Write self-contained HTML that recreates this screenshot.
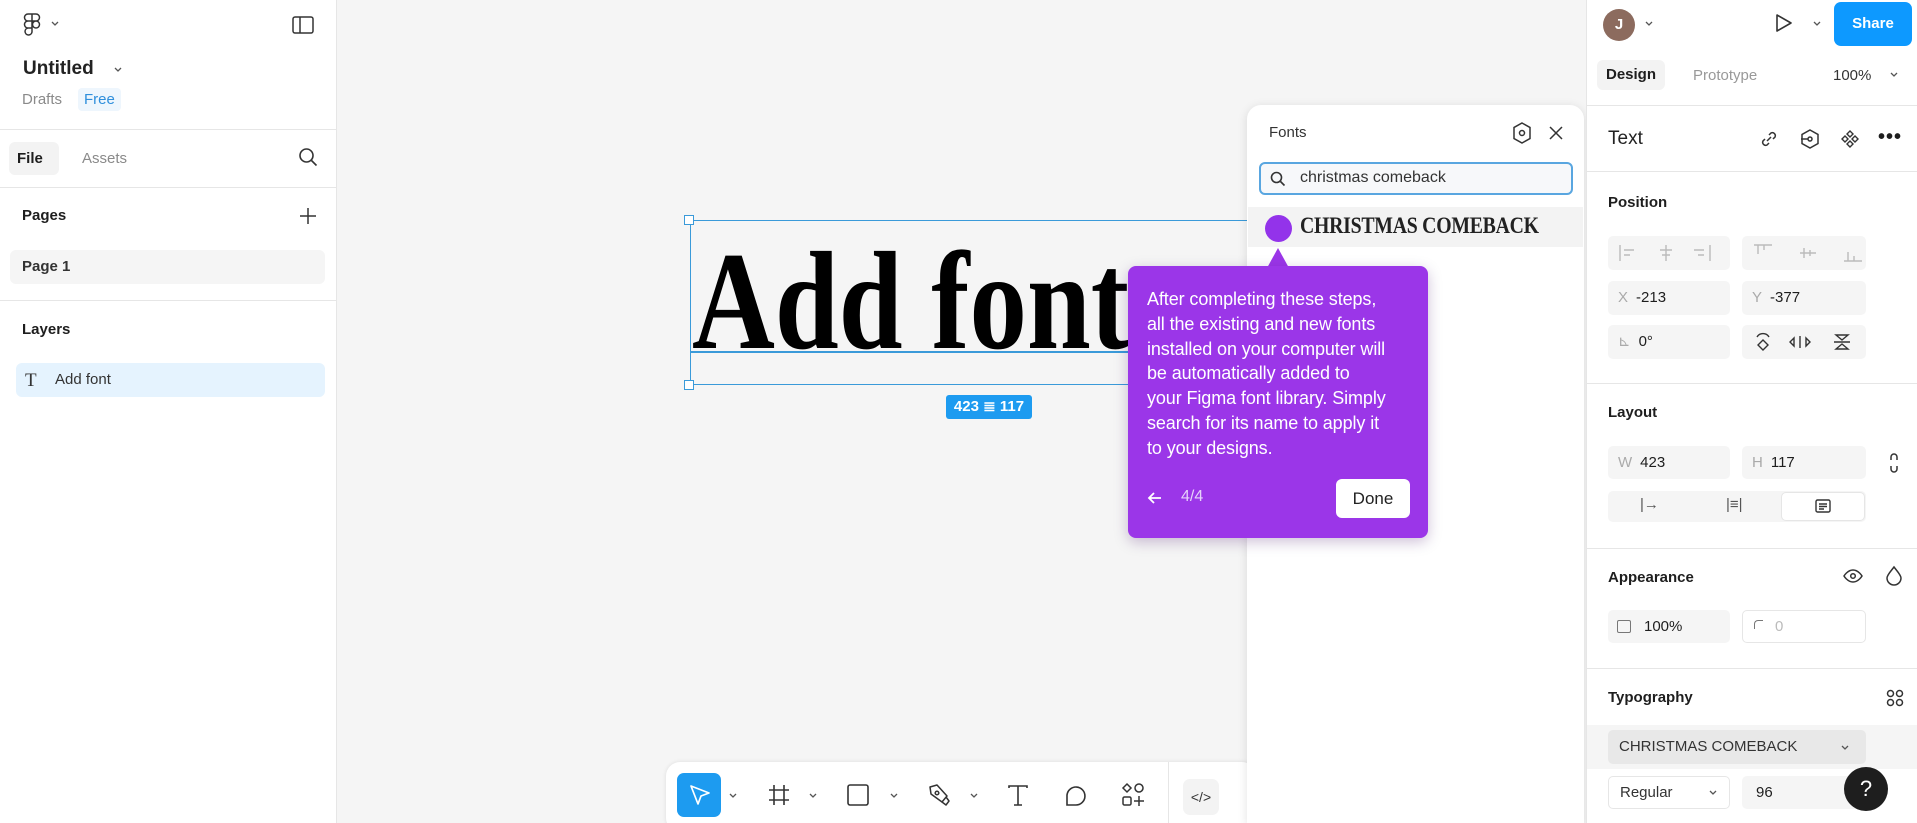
<!DOCTYPE html>
<html><head><meta charset="utf-8">
<style>
*{box-sizing:border-box;margin:0;padding:0}
html,body{width:1917px;height:823px;overflow:hidden}
body{background:#f5f5f5;font-family:"Liberation Sans",sans-serif;color:#1e1e1e;position:relative}
.abs{position:absolute}
.lp{left:0;top:0;width:337px;height:823px;background:#fff;border-right:1px solid #e6e6e6}
.hr{position:absolute;height:1px;background:#e6e6e6}
.rp{left:1586px;top:0;width:331px;height:823px;background:#fff;border-left:1px solid #e6e6e6}
.field{position:absolute;background:#f5f5f5;border-radius:5px;font-size:15px;line-height:34px;padding-left:10px}
.lbl{color:#aaa;margin-right:8px}
.sh{position:absolute;font-size:15px;font-weight:bold;color:#1e1e1e}
svg{position:absolute;overflow:visible}
</style></head><body>

<!-- left panel -->
<div class="abs lp">
  <svg style="left:24px;top:13px" width="16" height="24" viewBox="0 0 16 24" fill="none" stroke="#333" stroke-width="1.5"><path d="M4 1h4v7H4a3.5 3.5 0 0 1 0-7zM8 1h4a3.5 3.5 0 0 1 0 7H8zM4 8h4v7H4a3.5 3.5 0 0 1 0-7zM12 8a3.5 3.5 0 1 1 0 7 3.5 3.5 0 0 1 0-7zM4 15h4v4a3.5 3.5 0 1 1-4-4z"/></svg>
  <svg style="left:51px;top:21px" width="8" height="6" viewBox="0 0 8 6" fill="none" stroke="#555" stroke-width="1.3"><path d="M1 1l3 3 3-3"/></svg>
  <svg style="left:292px;top:16px" width="22" height="18" viewBox="0 0 22 18" fill="none" stroke="#333" stroke-width="1.5"><rect x="1" y="1" width="20" height="16" rx="2"/><path d="M8 1v16"/></svg>
  <div class="abs" style="left:23px;top:58px;font-size:19px;font-weight:bold;color:#222">Untitled</div>
  <svg style="left:114px;top:67px" width="8" height="6" viewBox="0 0 8 6" fill="none" stroke="#555" stroke-width="1.3"><path d="M1 1l3 3 3-3"/></svg>
  <div class="abs" style="left:22px;top:91px;font-size:15px;color:#8a8a8a">Drafts</div>
  <div class="abs" style="left:78px;top:88px;font-size:15px;color:#2f8fdc;background:#eef6fd;padding:3px 6px;border-radius:4px">Free</div>
  <div class="hr" style="left:0;top:129px;width:337px"></div>
  <div class="abs" style="left:9px;top:142px;width:50px;height:33px;background:#f3f3f3;border-radius:6px;font-size:15px;font-weight:bold;line-height:33px;padding-left:8px">File</div>
  <div class="abs" style="left:82px;top:150px;font-size:15px;color:#8a8a8a">Assets</div>
  <svg style="left:298px;top:147px" width="20" height="20" viewBox="0 0 20 20" fill="none" stroke="#333" stroke-width="1.6"><circle cx="8.5" cy="8.5" r="6.5"/><path d="M13.5 13.5l5 5"/></svg>
  <div class="hr" style="left:0;top:187px;width:337px"></div>
  <div class="abs" style="left:22px;top:207px;font-size:15px;font-weight:bold">Pages</div>
  <svg style="left:299px;top:207px" width="18" height="18" viewBox="0 0 18 18" fill="none" stroke="#333" stroke-width="1.5"><path d="M9 1v16M1 9h16"/></svg>
  <div class="abs" style="left:10px;top:250px;width:315px;height:34px;background:#f5f5f5;border-radius:6px;font-size:15px;line-height:34px;padding-left:12px;font-weight:bold;color:#333">Page 1</div>
  <div class="hr" style="left:0;top:300px;width:337px"></div>
  <div class="abs" style="left:22px;top:321px;font-size:15px;font-weight:bold">Layers</div>
  <div class="abs" style="left:16px;top:363px;width:309px;height:34px;background:#e5f3fe;border-radius:6px;font-size:15px;line-height:34px;padding-left:39px;color:#333">Add font</div>
  <div class="abs" style="left:25px;top:370px;font-size:19px;font-family:'Liberation Serif',serif;color:#333">T</div>
</div>

<!-- canvas -->
<div class="abs" style="left:690px;top:220px;width:570px;height:165px;border:1.5px solid #3a9ad9;border-right:none"></div>
<div class="abs" style="left:684px;top:215px;width:10px;height:10px;background:#fff;border:1.5px solid #3a9ad9"></div>
<div class="abs" style="left:684px;top:380px;width:10px;height:10px;background:#fff;border:1.5px solid #3a9ad9"></div>
<div class="abs" style="left:692px;top:232px;font-family:'Liberation Serif',serif;font-weight:bold;font-size:140px;line-height:140px;transform:scaleX(0.82);transform-origin:left top;color:#000;letter-spacing:0px;white-space:nowrap">Add font</div>
<div class="abs" style="left:690px;top:351px;width:560px;height:2px;background:#3a9ad9"></div>
<div class="abs" style="left:946px;top:395px;width:86px;height:24px;background:#1d9bf0;border-radius:3px;color:#fff;font-size:15px;line-height:24px;text-align:center;font-weight:bold">423 ≣ 117</div>

<!-- toolbar -->
<div class="abs" style="left:666px;top:762px;width:590px;height:70px;background:#fff;border-radius:14px;box-shadow:0 0 4px rgba(0,0,0,.1)"></div>
<div class="abs" style="left:677px;top:773px;width:44px;height:44px;background:#1d9bf0;border-radius:7px"></div>
<svg style="left:688px;top:783px" width="24" height="24" viewBox="0 0 24 24" fill="none" stroke="#fff" stroke-width="1.7" stroke-linejoin="round"><path d="M3 3l18 7-8 3-3 8z"/></svg>
<svg style="left:729px;top:793px" width="8" height="6" viewBox="0 0 8 6" fill="none" stroke="#555" stroke-width="1.3"><path d="M1 1l3 3 3-3"/></svg>
<svg style="left:768px;top:784px" width="22" height="22" viewBox="0 0 22 22" fill="none" stroke="#333" stroke-width="1.6"><path d="M6 1v20M16 1v20M1 6h20M1 16h20"/></svg>
<svg style="left:809px;top:793px" width="8" height="6" viewBox="0 0 8 6" fill="none" stroke="#555" stroke-width="1.3"><path d="M1 1l3 3 3-3"/></svg>
<svg style="left:847px;top:784px" width="22" height="22" viewBox="0 0 22 22" fill="none" stroke="#333" stroke-width="1.6"><rect x="1" y="1" width="20" height="20" rx="2"/></svg>
<svg style="left:890px;top:793px" width="8" height="6" viewBox="0 0 8 6" fill="none" stroke="#555" stroke-width="1.3"><path d="M1 1l3 3 3-3"/></svg>
<svg style="left:928px;top:784px" width="22" height="22" viewBox="0 0 22 22" fill="none" stroke="#333" stroke-width="1.5" stroke-linejoin="round"><path d="M2 3l7-2 10 11-5 6L3 10z"/><circle cx="9" cy="9" r="1.8"/><path d="M14 18l4 3 3-4-3-4"/></svg>
<svg style="left:970px;top:793px" width="8" height="6" viewBox="0 0 8 6" fill="none" stroke="#555" stroke-width="1.3"><path d="M1 1l3 3 3-3"/></svg>
<svg style="left:1007px;top:784px" width="22" height="22" viewBox="0 0 22 22" fill="none" stroke="#333" stroke-width="1.6"><path d="M2 4V2h18v2M11 2v19M7 21h8"/></svg>
<svg style="left:1065px;top:784px" width="22" height="22" viewBox="0 0 22 22" fill="none" stroke="#333" stroke-width="1.6"><path d="M2 21V11a9 9 0 1 1 9 10z"/></svg>
<svg style="left:1121px;top:783px" width="24" height="24" viewBox="0 0 24 24" fill="none" stroke="#333" stroke-width="1.5"><path d="M6 1l4 4-4 4-4-4z"/><circle cx="18" cy="5" r="4"/><rect x="2" y="14" width="8" height="8" rx="1.5"/><path d="M18 13v10M13 18h10"/></svg>
<div class="abs" style="left:1168px;top:762px;width:1px;height:61px;background:#e6e6e6"></div>
<div class="abs" style="left:1183px;top:779px;width:36px;height:36px;background:#f3f3f3;border-radius:7px;font-size:14px;line-height:36px;text-align:center;color:#333">&lt;/&gt;</div>

<!-- fonts panel -->
<div class="abs" style="left:1247px;top:105px;width:337px;height:718px;background:#fff;border-radius:14px 14px 0 0;box-shadow:0 2px 10px rgba(0,0,0,.12)"></div>
<div class="abs" style="left:1269px;top:124px;font-size:15px;color:#333">Fonts</div>
<svg style="left:1512px;top:122px" width="20" height="22" viewBox="0 0 20 22" fill="none" stroke="#333" stroke-width="1.5"><path d="M10 1l8 4.5v11L10 21l-8-4.5v-11z"/><circle cx="10" cy="11" r="2.5"/></svg>
<svg style="left:1549px;top:126px" width="14" height="14" viewBox="0 0 14 14" fill="none" stroke="#333" stroke-width="1.5"><path d="M1 1l12 12M13 1L1 13"/></svg>
<div class="abs" style="left:1259px;top:162px;width:314px;height:33px;border:2px solid #59a6e0;border-radius:6px;background:#f7f8fa"></div>
<svg style="left:1270px;top:171px" width="16" height="16" viewBox="0 0 16 16" fill="none" stroke="#333" stroke-width="1.6"><circle cx="6.5" cy="6.5" r="5"/><path d="M10.5 10.5l4 4"/></svg>
<div class="abs" style="left:1300px;top:169px;font-size:16px;color:#333">christmas comeback</div>
<div class="abs" style="left:1248px;top:207px;width:335px;height:40px;background:#f3f3f3"></div>
<div class="abs" style="left:1265px;top:215px;width:27px;height:27px;border-radius:50%;background:#9333ea"></div>
<div class="abs" style="left:1300px;top:213px;font-family:'Liberation Serif',serif;font-weight:bold;font-size:23px;color:#222;transform:scaleX(0.86);transform-origin:left top;white-space:nowrap;letter-spacing:-0.3px">CHRISTMAS COMEBACK</div>

<!-- tooltip -->
<div class="abs" style="left:1267px;top:248px;width:0;height:0;border-left:11px solid transparent;border-right:11px solid transparent;border-bottom:20px solid #9b36e8"></div>
<div class="abs" style="left:1128px;top:266px;width:300px;height:272px;background:#9b36e8;border-radius:8px;box-shadow:0 4px 14px rgba(60,0,100,.25)"></div>
<div class="abs" style="left:1147px;top:287px;font-size:18px;line-height:24.8px;color:#fff;letter-spacing:-0.1px;white-space:nowrap">After completing these steps,<br>all the existing and new fonts<br>installed on your computer will<br>be automatically added to<br>your Figma font library. Simply<br>search for its name to apply it<br>to your designs.</div>
<svg style="left:1148px;top:492px" width="14" height="12" viewBox="0 0 14 12" fill="none" stroke="#fff" stroke-width="1.8"><path d="M13 6H2M6 1L1 6l5 5"/></svg>
<div class="abs" style="left:1181px;top:488px;font-size:16px;color:#e6d2fa">4/4</div>
<div class="abs" style="left:1336px;top:479px;width:74px;height:39px;background:#fff;border-radius:6px;font-size:17px;line-height:39px;text-align:center;color:#222">Done</div>

<!-- right panel -->
<div class="abs rp"></div>
<div class="abs" style="left:1603px;top:9px;width:32px;height:32px;border-radius:50%;background:#8c6b5e;color:#fff;font-size:15px;font-weight:bold;line-height:32px;text-align:center">J</div>
<svg style="left:1645px;top:21px" width="8" height="6" viewBox="0 0 8 6" fill="none" stroke="#555" stroke-width="1.3"><path d="M1 1l3 3 3-3"/></svg>
<svg style="left:1775px;top:13px" width="18" height="20" viewBox="0 0 18 20" fill="none" stroke="#333" stroke-width="1.6" stroke-linejoin="round"><path d="M2 2l14 8-14 8z"/></svg>
<svg style="left:1813px;top:21px" width="8" height="6" viewBox="0 0 8 6" fill="none" stroke="#555" stroke-width="1.3"><path d="M1 1l3 3 3-3"/></svg>
<div class="abs" style="left:1834px;top:2px;width:78px;height:44px;background:#0d99ff;border-radius:7px;color:#fff;font-size:15px;font-weight:bold;line-height:44px;text-align:center">Share</div>
<div class="abs" style="left:1597px;top:60px;width:68px;height:30px;background:#f3f3f3;border-radius:6px;font-size:15px;font-weight:bold;line-height:30px;text-align:center">Design</div>
<div class="abs" style="left:1693px;top:67px;font-size:15px;color:#999">Prototype</div>
<div class="abs" style="left:1833px;top:67px;font-size:15px;color:#333">100%</div>
<svg style="left:1890px;top:72px" width="8" height="6" viewBox="0 0 8 6" fill="none" stroke="#555" stroke-width="1.3"><path d="M1 1l3 3 3-3"/></svg>
<div class="hr" style="left:1586px;top:105px;width:331px"></div>
<div class="abs" style="left:1608px;top:128px;font-size:19px;color:#222">Text</div>
<svg style="left:1760px;top:130px" width="18" height="18" viewBox="0 0 18 18" fill="none" stroke="#333" stroke-width="1.5"><path d="M7 11l4-4M5 9l-2 2a3 3 0 0 0 4 4l2-2M13 9l2-2a3 3 0 0 0-4-4L9 5"/></svg>
<svg style="left:1800px;top:129px" width="20" height="20" viewBox="0 0 20 20" fill="none" stroke="#333" stroke-width="1.5"><path d="M10 1l8 4.5v9L10 19l-8-4.5v-9z"/><circle cx="10" cy="10" r="2"/><path d="M1 10h7"/></svg>
<svg style="left:1841px;top:130px" width="18" height="18" viewBox="0 0 18 18" fill="none" stroke="#333" stroke-width="1.4"><path d="M9 1l3 3-3 3-3-3zM9 11l3 3-3 3-3-3zM4 6l3 3-3 3-3-3zM14 6l3 3-3 3-3-3z"/></svg>
<div class="abs" style="left:1878px;top:126px;font-size:20px;font-weight:bold;letter-spacing:1px">•••</div>
<div class="hr" style="left:1586px;top:171px;width:331px"></div>
<div class="sh" style="left:1608px;top:194px">Position</div>
<div class="field" style="left:1608px;top:236px;width:122px;height:34px"></div>
<div class="field" style="left:1742px;top:236px;width:124px;height:34px"></div>
<svg style="left:1618px;top:244px" width="240" height="18" viewBox="0 0 240 18" fill="none" stroke="#bbb" stroke-width="1.4"><path d="M2 1v16M6 6h10M6 11h6M48 1v16M42 6h12M44 11h8M92 1v16M76 6h10M80 11h6M136 1h18M140 1v9M146 1v5M182 9h16M186 4v10M192 6v6M226 17h18M230 8v9M236 12v5"/></svg>
<div class="field" style="left:1608px;top:281px;width:122px;height:34px"><span class="lbl">X</span>-213</div>
<div class="field" style="left:1742px;top:281px;width:124px;height:34px"><span class="lbl">Y</span>-377</div>
<div class="field" style="left:1608px;top:325px;width:122px;height:34px"><span class="lbl">⊾</span>0°</div>
<div class="field" style="left:1742px;top:325px;width:124px;height:34px"></div>
<svg style="left:1754px;top:332px" width="100" height="20" viewBox="0 0 100 20" fill="none" stroke="#333" stroke-width="1.4"><path d="M3 5a7 7 0 0 1 12 0M9 8l5 5-5 5-5-5z"/><path d="M46 4v12M40 6l-4 4 4 4zM52 6l4 4-4 4z"/><path d="M80 10h16M82 3h12l-6 5zM82 17h12l-6-5z"/></svg>
<div class="hr" style="left:1586px;top:383px;width:331px"></div>
<div class="sh" style="left:1608px;top:404px">Layout</div>
<div class="field" style="left:1608px;top:446px;width:122px;height:33px"><span class="lbl">W</span>423</div>
<div class="field" style="left:1742px;top:446px;width:124px;height:33px"><span class="lbl">H</span>117</div>
<svg style="left:1889px;top:452px" width="10" height="22" viewBox="0 0 10 22" fill="none" stroke="#333" stroke-width="1.5"><path d="M2 8V5a3 3 0 0 1 6 0v3M2 14v3a3 3 0 0 0 6 0v-3"/></svg>
<div class="field" style="left:1608px;top:491px;width:258px;height:31px;padding:0"></div>
<div class="abs" style="left:1640px;top:496px;font-size:15px;color:#555">|→</div>
<div class="abs" style="left:1726px;top:496px;font-size:15px;color:#555">|≡|</div>
<div class="abs" style="left:1781px;top:492px;width:84px;height:29px;background:#fff;border-radius:5px;border:1px solid #e6e6e6"></div>
<svg style="left:1815px;top:499px" width="16" height="14" viewBox="0 0 16 14" fill="none" stroke="#333" stroke-width="1.4"><rect x="1" y="1" width="14" height="12" rx="1.5"/><path d="M4 5h8M4 7.5h8M4 10h5"/></svg>
<div class="hr" style="left:1586px;top:548px;width:331px"></div>
<div class="sh" style="left:1608px;top:569px">Appearance</div>
<svg style="left:1843px;top:569px" width="20" height="14" viewBox="0 0 20 14" fill="none" stroke="#333" stroke-width="1.5"><path d="M1 7s3.5-6 9-6 9 6 9 6-3.5 6-9 6-9-6-9-6z"/><circle cx="10" cy="7" r="2.3"/></svg>
<svg style="left:1886px;top:566px" width="16" height="20" viewBox="0 0 16 20" fill="none" stroke="#333" stroke-width="1.5"><path d="M8 1c3 4 7 8 7 11a7 7 0 0 1-14 0c0-3 4-7 7-11z"/></svg>
<div class="field" style="left:1608px;top:610px;width:122px;height:33px;padding-left:36px">100%</div>
<div class="abs" style="left:1617px;top:620px;width:14px;height:13px;border:1.3px solid #777;border-radius:2px"></div>
<div class="abs" style="left:1742px;top:610px;width:124px;height:33px;border:1px solid #e6e6e6;border-radius:5px;font-size:15px;line-height:31px;padding-left:32px;color:#bbb">0</div>
<div class="abs" style="left:1754px;top:620px;width:9px;height:9px;border-left:1.5px solid #777;border-top:1.5px solid #777;border-top-left-radius:4px"></div>
<div class="hr" style="left:1586px;top:668px;width:331px"></div>
<div class="sh" style="left:1608px;top:689px">Typography</div>
<svg style="left:1886px;top:689px" width="18" height="18" viewBox="0 0 18 18" fill="none" stroke="#333" stroke-width="1.5"><circle cx="4.5" cy="4.5" r="3"/><circle cx="13.5" cy="4.5" r="3"/><circle cx="4.5" cy="13.5" r="3"/><circle cx="13.5" cy="13.5" r="3"/></svg>
<div class="abs" style="left:1587px;top:725px;width:330px;height:44px;background:#f5f5f5"></div>
<div class="abs" style="left:1608px;top:730px;width:258px;height:34px;background:#e8e8e8;border-radius:5px;font-size:15px;line-height:34px;padding-left:11px;color:#333">CHRISTMAS COMEBACK</div>
<svg style="left:1841px;top:745px" width="8" height="6" viewBox="0 0 8 6" fill="none" stroke="#555" stroke-width="1.3"><path d="M1 1l3 3 3-3"/></svg>
<div class="abs" style="left:1608px;top:776px;width:122px;height:33px;border:1px solid #e6e6e6;border-radius:5px;font-size:15px;line-height:31px;padding-left:11px;color:#333">Regular</div>
<svg style="left:1709px;top:790px" width="8" height="6" viewBox="0 0 8 6" fill="none" stroke="#555" stroke-width="1.3"><path d="M1 1l3 3 3-3"/></svg>
<div class="field" style="left:1742px;top:776px;width:124px;height:33px;line-height:33px;padding-left:14px">96</div>
<div class="abs" style="left:1844px;top:767px;width:44px;height:44px;border-radius:50%;background:#1e1e1e;color:#fff;font-size:22px;line-height:44px;text-align:center">?</div>
</body></html>
